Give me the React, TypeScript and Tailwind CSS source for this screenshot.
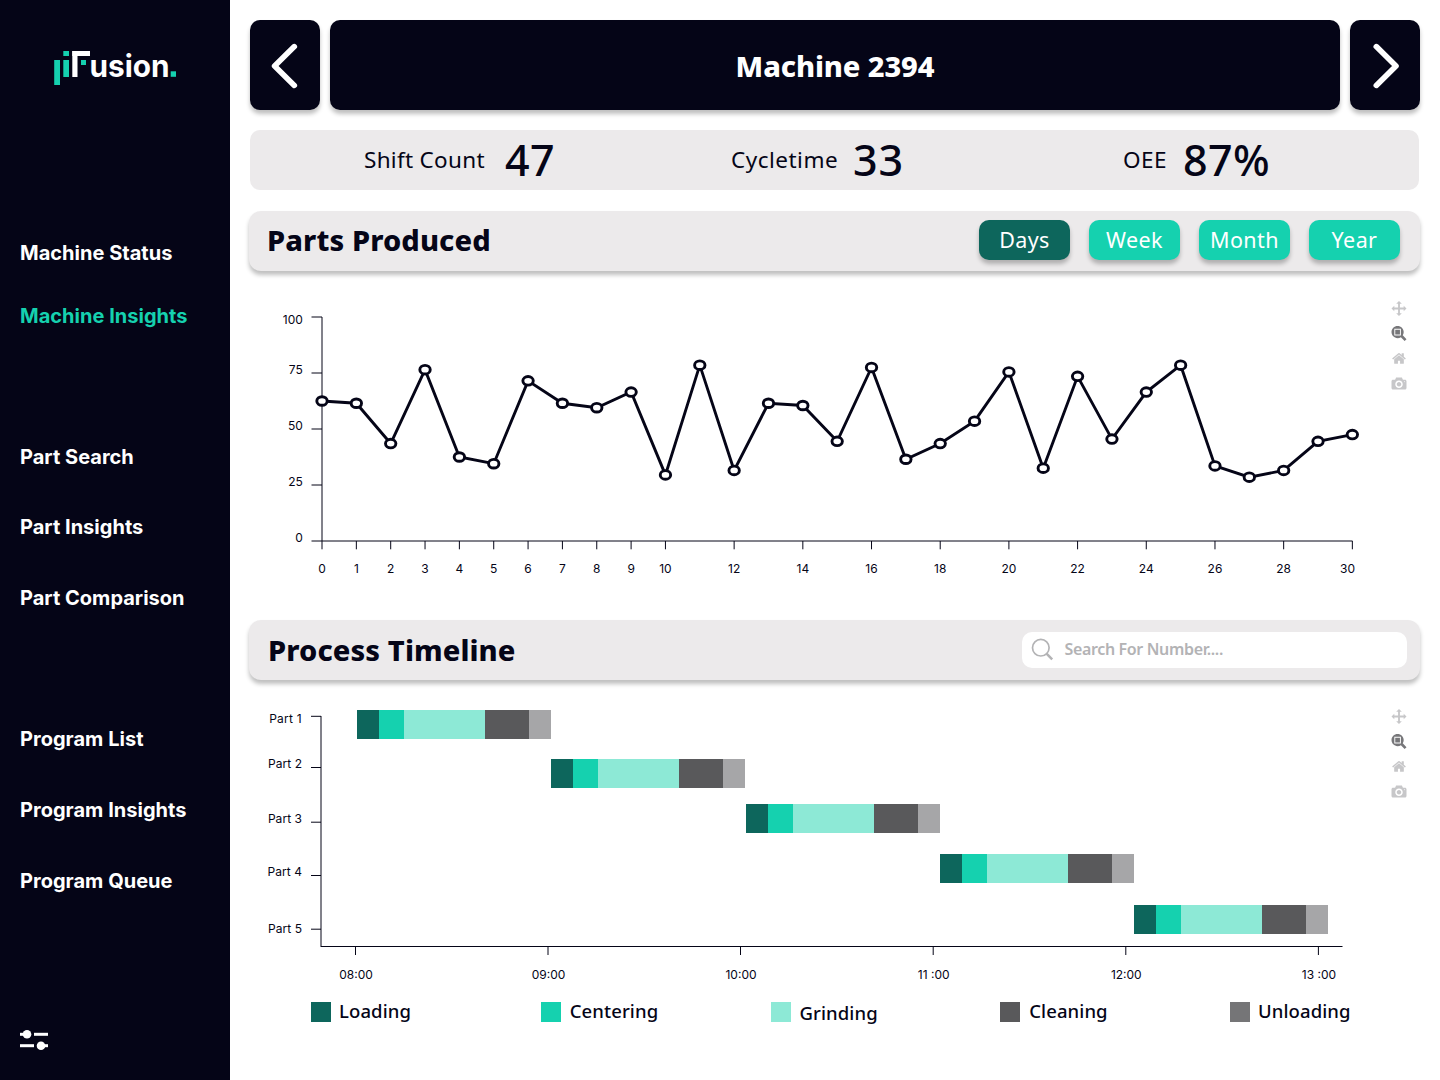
const INK = '#050517';

const navItems = [
  { label: 'Machine Status', gap: 'mt-[243px]' },
  { label: 'Machine Insights', gap: 'mt-[43px]', active: true },
  { label: 'Part Search', gap: 'mt-[121px]' },
  { label: 'Part Insights', gap: 'mt-[50px]' },
  { label: 'Part Comparison', gap: 'mt-[51px]' },
  { label: 'Program List', gap: 'mt-[121px]' },
  { label: 'Program Insights', gap: 'mt-[51px]' },
  { label: 'Program Queue', gap: 'mt-[51px]' },
];

const produced = [
  62.5, 61.5, 43.5, 76.5, 37.5, 34.5, 71.5, 61.5, 59.5, 66.5, 29.5, 78.5, 31.5, 61.5, 60.5, 44.5,
  77.5, 36.5, 43.5, 53.5, 75.5, 32.5, 73.5, 45.5, 66.5, 78.5, 33.5, 28.5, 31.5, 44.5, 47.5,
];

const ranges = [
  { label: 'Days', active: true },
  { label: 'Week' },
  { label: 'Month' },
  { label: 'Year' },
];

const segments = [
  { w: 22, color: '#0D665C' },
  { w: 25, color: '#15D1AF' },
  { w: 81, color: '#8DE9D6' },
  { w: 44, color: '#59595B' },
  { w: 22, color: '#A6A6A8' },
];

const parts = [
  { label: 'Part 1', x: 357, y: 710, labelX: 302, labelY: 719, tick: 716.3 },
  { label: 'Part 2', x: 551, y: 759, labelX: 302, labelY: 764, tick: 767.5 },
  { label: 'Part 3', x: 746, y: 804, labelX: 302, labelY: 818.8, tick: 822.2 },
  { label: 'Part 4', x: 940, y: 854, labelX: 302, labelY: 872, tick: 875.5 },
  { label: 'Part 5', x: 1134, y: 905, labelX: 302, labelY: 928.8, tick: 929.2 },
];

const hours = [
  { label: '08:00', x: 355.5 },
  { label: '09:00', x: 548 },
  { label: '10:00', x: 740.5 },
  { label: '11 :00', x: 933.2 },
  { label: '12:00', x: 1125.8 },
  { label: '13 :00', x: 1318.4 },
];

const legend = [
  { label: 'Loading', swatch: 'bg-[#0D665C]', shift: 'pb-[2px]' },
  { label: 'Centering', swatch: 'bg-[#15D1AF]', shift: 'pb-[2px] pl-px' },
  { label: 'Grinding', swatch: 'bg-[#8DE9D6]', shift: 'pt-px pl-px' },
  { label: 'Cleaning', swatch: 'bg-[#59595B]', shift: 'pb-[2px] pl-px' },
  { label: 'Unloading', swatch: 'bg-[#757577]', shift: 'pb-[2px]' },
];

const modeIcons = [
  {
    name: 'Pan',
    w: 1000,
    color: '#C7C7C9',
    d: 'm1000 350l-187 188 0-125-250 0 0 250 125 0-188 187-187-187 125 0 0-250-250 0 0 125-188-188 186-187 0 125 252 0 0-250-125 0 187-188 188 188-125 0 0 250 250 0 0-126 187 188z',
  },
  {
    name: 'Zoom',
    w: 1000,
    color: '#77777A',
    d: 'm1000-25l-250 251c40 63 63 138 63 218 0 224-182 406-407 406-224 0-406-182-406-406s183-406 407-406c80 0 155 22 218 62l250-250 125 125z m-812 250l0 438 437 0 0-438-437 0z m62 375l313 0 0-312-313 0 0 312z',
  },
  {
    name: 'Reset',
    w: 928.6,
    color: '#C7C7C9',
    d: 'm786 296v-267q0-15-11-26t-25-10h-214v214h-143v-214h-214q-15 0-25 10t-11 26v267q0 1 0 2t0 2l321 264 321-264q1-1 1-4z m124 39l-34-41q-5-5-12-6h-2q-7 0-12 3l-386 322-386-322q-7-4-13-4-7 2-12 7l-35 41q-4 5-3 13t6 12l401 334q18 15 42 15t43-15l136-114v109q0 8 5 13t13 5h107q8 0 13-5t5-13v-227l122-102q5-5 6-12t-4-13z',
  },
  {
    name: 'Snapshot',
    w: 1000,
    color: '#C7C7C9',
    d: 'm500 450c-83 0-150-67-150-150 0-83 67-150 150-150 83 0 150 67 150 150 0 83-67 150-150 150z m400 150h-120c-16 0-34 13-39 29l-31 93c-6 15-23 28-40 28h-340c-16 0-34-13-39-28l-31-94c-6-15-23-28-40-28h-120c-55 0-100-45-100-100v-450c0-55 45-100 100-100h800c55 0 100 45 100 100v450c0 55-45 100-100 100z m-400-550c-138 0-250 112-250 250 0 138 112 250 250 250 138 0 250-112 250-250 0-138-112-250-250-250z m365 380c-19 0-35 16-35 35 0 19 16 35 35 35 19 0 35-16 35-35 0-19-16-35-35-35z',
  },
];

function ModeBar() {
  return (
    <div className="flex w-[16px] flex-col gap-[10px]">
      {modeIcons.map((icon) => (
        <svg key={icon.name} aria-label={icon.name} className="h-[15px] w-[16px]" viewBox={`${(icon.w - 1066) / 2} 0 1066 1000`}>
          <path d={icon.d} fill={icon.color} transform="matrix(1 0 0 -1 0 850)" />
        </svg>
      ))}
    </div>
  );
}

function Logo() {
  return (
    <svg className="absolute left-[50px] top-[45px] h-[45px] w-[130px]" viewBox="50 45 130 45">
      <g fill="#15D1AF">
        <rect x="54.2" y="60" width="5.8" height="25" />
        <rect x="63.3" y="51" width="5.7" height="5" />
        <rect x="63.3" y="60" width="5.7" height="17" />
        <rect x="81" y="60" width="5" height="5" />
        <rect x="170.7" y="71.3" width="5.3" height="5.5" />
      </g>
      <g fill="#fff">
        <rect x="72.3" y="51" width="17.7" height="5" />
        <rect x="72.3" y="51" width="5.2" height="26" />
        <text x="89.5" y="77" fontFamily="Inter, sans-serif" fontWeight="700" fontSize="31" textLength="80" lengthAdjust="spacingAndGlyphs">
          usion
        </text>
      </g>
    </svg>
  );
}

function Sidebar() {
  return (
    <aside className="relative flex h-[1080px] w-[230px] shrink-0 flex-col bg-[#050517] pl-[20px]">
      <Logo />
      <nav className="flex flex-col">
        {navItems.map((item) => (
          <a
            key={item.label}
            className={`${item.gap} whitespace-nowrap font-['Inter',sans-serif] text-[20px] font-[680] leading-[20px] tracking-[0.02px] ${item.active ? 'text-[#15D1AF]' : 'text-white'}`}
          >
            {item.label}
          </a>
        ))}
      </nav>
      <svg className="mt-[137px] h-[24px] w-[28px]" viewBox="0 0 28 24">
        <g fill="#fff">
          <rect x="0" y="4.8" width="5" height="3" />
          <circle cx="7" cy="6.3" r="4.3" />
          <rect x="14" y="4.8" width="14" height="3" />
          <rect x="0" y="16.2" width="14" height="3" />
          <circle cx="21" cy="17.7" r="4.3" />
          <rect x="23" y="16.2" width="5" height="3" />
        </g>
      </svg>
    </aside>
  );
}

function LineChart() {
  const px = (i: number) => 322 + i * 34.345;
  const py = (v: number) => 541 - v * 2.24;
  return (
    <svg className="h-[320px] w-[1130px]" viewBox="250 281 1130 320">
      <g stroke={INK} strokeWidth="1" fill="none">
        <path d="M322 317V541H1352.5" />
        {[0, 25, 50, 75, 100].map((v) => (
          <path key={v} d={`M311.5 ${py(v)}H322`} />
        ))}
        {produced.map((_, i) =>
          i <= 10 || i % 2 === 0 ? <path key={i} d={`M${px(i)} 541V549.3`} /> : null,
        )}
      </g>
      <polyline
        points={produced.map((v, i) => `${px(i)},${py(v)}`).join(' ')}
        fill="none"
        stroke={INK}
        strokeWidth="2.9"
      />
      {produced.map((v, i) => (
        <ellipse key={i} cx={px(i)} cy={py(v)} rx="5.2" ry="4.3" fill="#fff" stroke={INK} strokeWidth="2.9" />
      ))}
      <g fill={INK} fontFamily="Inter, sans-serif" fontSize="12">
        {[0, 25, 50, 75, 100].map((v) => (
          <text key={v} x="303" y={v === 100 ? 324.3 : py(v) + 1.4} textAnchor="end" letterSpacing="0.1">
            {v}
          </text>
        ))}
        {produced.map((_, i) =>
          i <= 10 || i % 2 === 0 ? (
            <text key={i} x={i === 30 ? 1347.5 : px(i)} y="573.4" textAnchor="middle">
              {i}
            </text>
          ) : null,
        )}
      </g>
    </svg>
  );
}

function Timeline() {
  return (
    <svg className="h-[300px] w-[1130px]" viewBox="250 690 1130 300">
      <g stroke={INK} strokeWidth="1" fill="none">
        <path d="M321 716V947" />
        <path d="M321 946.5H1342.5" />
        {parts.map((p) => (
          <path key={p.label} d={`M311 ${p.tick}H321`} />
        ))}
        {hours.map((h) => (
          <path key={h.label} d={`M${h.x} 947V955`} />
        ))}
      </g>
      <g shapeRendering="crispEdges">
        {parts.map((p) =>
          segments.map((s, i) => (
            <rect
              key={`${p.label}-${s.color}`}
              x={p.x + segments.slice(0, i).reduce((sum, seg) => sum + seg.w, 0)}
              y={p.y}
              width={s.w}
              height="29"
              fill={s.color}
            />
          )),
        )}
      </g>
      <g fill={INK} fontFamily="Inter, sans-serif" fontSize="12">
        {parts.map((p) => (
          <text key={p.label} x={p.labelX} y={p.labelY + 4.4} textAnchor="end" letterSpacing={p.label === 'Part 1' ? 0.25 : 0.05}>
            {p.label}
          </text>
        ))}
        {hours.map((h) => (
          <text key={h.label} x={h.x + 0.5} y="979.4" textAnchor="middle">
            {h.label}
          </text>
        ))}
      </g>
    </svg>
  );
}

function ArrowButton({ d }: { d: string }) {
  return (
    <button className="h-[90px] w-[70px] rounded-[10px] bg-[#050517] shadow-[0_4px_4px_rgba(0,0,0,0.25)]">
      <svg className="h-[90px] w-[70px]" viewBox="0 0 70 90">
        <path d={d} fill="none" stroke="#fff" strokeWidth="5.6" strokeLinecap="round" strokeLinejoin="round" />
      </svg>
    </button>
  );
}

const panel =
  'ml-[-1px] flex h-[60px] w-[1171px] items-center rounded-[12px] bg-[#ECEAEB] shadow-[0_4px_4px_rgba(0,0,0,0.25)]';

export default function App() {
  return (
    <div className="flex h-[1080px] w-[1440px] overflow-hidden bg-white font-['Noto_Sans',sans-serif] text-[#050517]">
      <Sidebar />
      <main className="flex w-[1210px] flex-col pl-[20px] pt-[20px]">
        <header className="flex gap-[10px]">
          <ArrowButton d="M44.3 26.6L24.6 46L44.3 65.4" />
          <h1 className="flex h-[90px] w-[1010px] items-center justify-center rounded-[10px] bg-[#050517] pt-px text-[29px] font-extrabold tracking-[-0.1px] text-white shadow-[0_4px_4px_rgba(0,0,0,0.25)]">
            Machine 2394
          </h1>
          <ArrowButton d="M26.3 26.6L46 46L26.3 65.4" />
        </header>

        <section className="mt-[20px] grid h-[60px] w-[1169px] grid-cols-[141px_226px_122px_270px_60px_auto] items-center whitespace-nowrap rounded-[10px] bg-[#ECEAEB] pl-[114px]">
          <span className="pb-px text-[22.5px] tracking-[0.3px]">Shift Count</span>
          <span className="text-[43px] font-medium leading-[60px] tracking-[0.5px]">47</span>
          <span className="pb-px text-[22.5px] tracking-[0.5px]">Cycletime</span>
          <span className="text-[43px] font-medium leading-[60px] tracking-[0.8px]">33</span>
          <span className="pb-px text-[22.5px] tracking-[0.4px]">OEE</span>
          <span className="text-[43px] font-medium leading-[60px] tracking-[0.4px]">87%</span>
        </section>

        <section className={`${panel} mt-[21px] justify-between pl-[18px] pr-[20px]`}>
          <h2 className="pb-[2px] text-[29px] font-extrabold tracking-[0.1px]">Parts Produced</h2>
          <div className="mb-[3px] flex gap-[19px]">
            {ranges.map((r) => (
              <button
                key={r.label}
                className={`flex h-[40px] w-[91px] items-center justify-center rounded-[10px] pt-[2px] text-[21.5px] tracking-[0.4px] text-white shadow-[0_4px_4px_rgba(0,0,0,0.25)] ${r.active ? 'bg-[#0D665C]' : 'bg-[#15D1AF]'}`}
              >
                {r.label}
              </button>
            ))}
          </div>
        </section>

        <div className="mt-[10px] flex h-[320px]">
          <LineChart />
          <div className="ml-[11px] mt-[20px]">
            <ModeBar />
          </div>
        </div>

        <section className={`${panel} mt-[19px] justify-between pl-[19px] pr-[13px]`}>
          <h2 className="text-[29px] font-extrabold tracking-[0.1px]">Process Timeline</h2>
          <div className="flex h-[36px] w-[385px] items-center rounded-[10px] bg-white pl-[9px]">
            <svg className="h-[24px] w-[23px]" viewBox="0 0 23 24" fill="none" stroke="#B3B3B5">
              <circle cx="9.8" cy="9.7" r="8.3" strokeWidth="1.7" />
              <path d="M15.5 15.7L21.2 21.4" strokeWidth="2.5" />
            </svg>
            <span className="ml-[10.5px] pb-[2px] text-[16px] font-semibold tracking-[-0.35px] text-[#B3B3B5]">
              Search For Number....
            </span>
          </div>
        </section>

        <div className="mt-[10px] flex h-[300px]">
          <Timeline />
          <div className="ml-[11px] mt-[19px]">
            <ModeBar />
          </div>
        </div>

        <ul className="ml-[61px] mt-[7px] flex h-[30px]">
          {legend.map((l) => (
            <li key={l.label} className="flex w-[229.75px] shrink-0 items-center gap-[8px] last:w-[125px]">
              <span className={`h-[20px] w-[20px] ${l.swatch}`} />
              <span className={`text-[18.5px] font-medium leading-[20px] tracking-[0.1px] ${l.shift}`}>{l.label}</span>
            </li>
          ))}
        </ul>
      </main>
    </div>
  );
}
